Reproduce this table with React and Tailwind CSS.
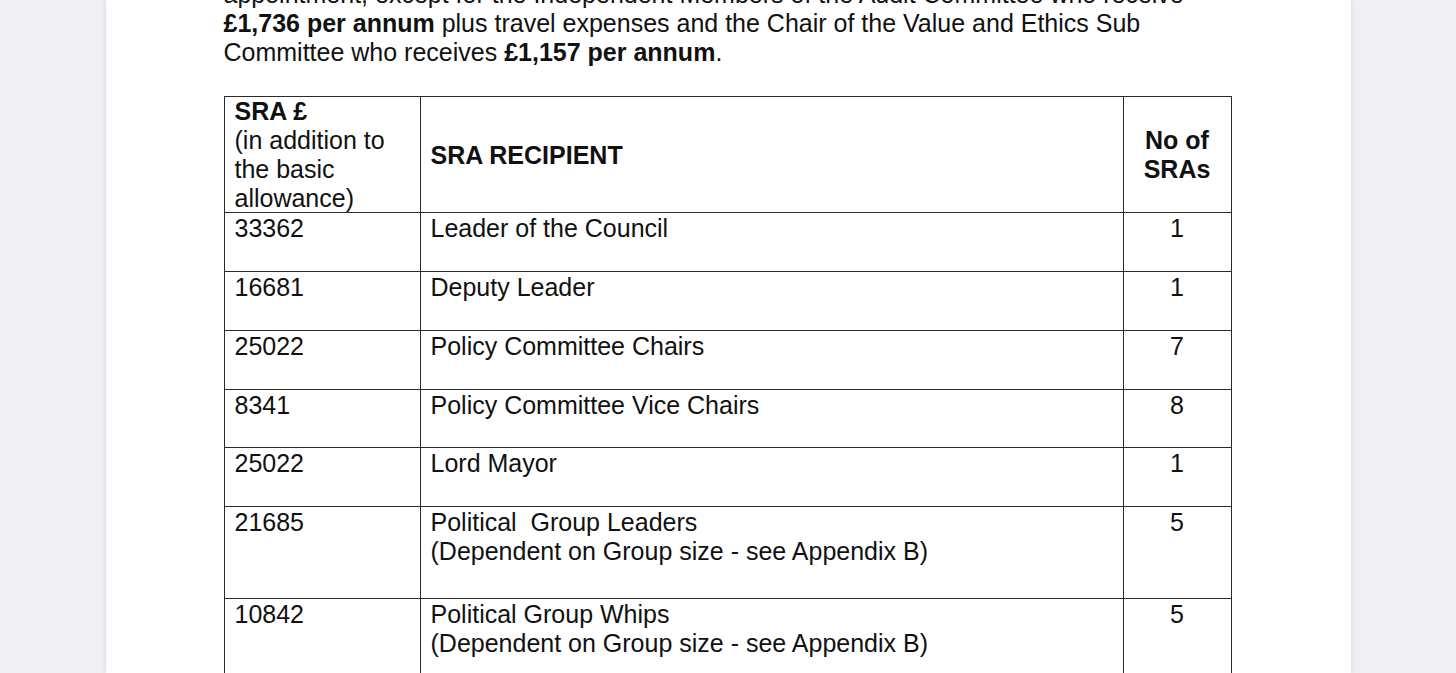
const rows = [
  { amount: '33362', recipient: ['Leader of the Council'], count: '1', h: 'h-[59px]' },
  { amount: '16681', recipient: ['Deputy Leader'], count: '1', h: 'h-[59px]' },
  { amount: '25022', recipient: ['Policy Committee Chairs'], count: '7', h: 'h-[59px]' },
  { amount: '8341', recipient: ['Policy Committee Vice Chairs'], count: '8', h: 'h-[58px]' },
  { amount: '25022', recipient: ['Lord Mayor'], count: '1', h: 'h-[59px]' },
  {
    amount: '21685',
    recipient: ['Political\u00a0 Group Leaders', '(Dependent on Group size - see Appendix B)'],
    count: '5',
    h: 'h-[92px]',
  },
  {
    amount: '10842',
    recipient: ['Political Group Whips', '(Dependent on Group size - see Appendix B)'],
    count: '5',
    h: 'h-[92px]',
  },
]

function App() {
  return (
    <div className="h-[673px] overflow-hidden bg-[#efeff4]">
      <div
        className="mx-auto flow-root h-full w-[1245px] bg-white pl-[118px] text-[25px] leading-[29px] text-[#111] shadow-[0_0_6px_rgba(0,0,0,0.12)]"
        style={{ fontFamily: '"Liberation Sans", Arial, sans-serif' }}
      >
        {/* paragraph above the table, first line runs off the top */}
        <p className="mt-[-20px] whitespace-nowrap">
          appointment, except for the Independent Members of the Audit Committee who receive
          <br />
          <b>£1,736 per annum</b> plus travel expenses and the Chair of the Value and Ethics Sub
          <br />
          Committee who receives <b>£1,157 per annum</b>.
        </p>

        {/* SRA table */}
        <div className="mt-[29px] w-[1008px] border-l border-t border-[#2b2b2b]">
          <div className="grid h-[116px] grid-cols-[196px_703px_108px] border-b border-[#2b2b2b]">
            <div className="border-r border-[#2b2b2b] px-[10px]">
              <b>SRA £</b>
              <br />
              (in addition to
              <br />
              the basic
              <br />
              allowance)
            </div>
            <div className="flex items-center border-r border-[#2b2b2b] px-[10px] font-bold">SRA RECIPIENT</div>
            <div className="flex flex-col items-center justify-center border-r border-[#2b2b2b] text-center font-bold">
              <span>No of</span>
              <span>SRAs</span>
            </div>
          </div>

          {rows.map((r, i) => (
            <div key={i} className={`grid grid-cols-[196px_703px_108px] border-b border-[#2b2b2b] ${r.h}`}>
              <div className="border-r border-[#2b2b2b] px-[10px] pt-px">{r.amount}</div>
              <div className="whitespace-nowrap border-r border-[#2b2b2b] px-[10px] pt-px">
                {r.recipient.map((line, j) => (
                  <div key={j}>{line}</div>
                ))}
              </div>
              <div className="border-r border-[#2b2b2b] pt-px text-center">{r.count}</div>
            </div>
          ))}
        </div>
      </div>
    </div>
  )
}

export default App
